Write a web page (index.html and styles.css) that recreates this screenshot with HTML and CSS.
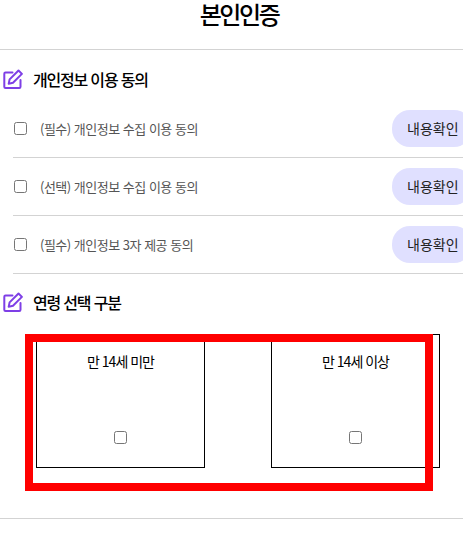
FILE: index.html
```html
<!DOCTYPE html>
<html lang="ko">
<head>
<meta charset="utf-8">
<title>본인인증</title>
<link rel="stylesheet" href="styles.css">
</head>
<body>
<main class="page">
  <header class="top"><h1 class="title">본인인증</h1></header>
  <section class="terms">
    <h2 class="heading">
      <svg class="icon" viewBox="0 0 20 20" aria-hidden="true"><path d="M9.500 3.500H2.500a1.200 1.200 0 0 0-1.200 1.200V17.800a1.200 1.200 0 0 0 1.200 1.200H16.300a1.200 1.200 0 0 0 1.200-1.200V11"/><path d="M15.500 1.500l3.400 3.400-8.900 8.900-4.300.9.900-4.300z"/></svg>
      개인정보 이용 동의
    </h2>
    <ul class="list">
      <li class="row"><input class="check" type="checkbox"><span class="label">(필수) 개인정보 수집 이용 동의</span><button class="pill">내용확인</button></li>
      <li class="row"><input class="check" type="checkbox"><span class="label">(선택) 개인정보 수집 이용 동의</span><button class="pill">내용확인</button></li>
      <li class="row"><input class="check" type="checkbox"><span class="label">(필수) 개인정보 3자 제공 동의</span><button class="pill">내용확인</button></li>
    </ul>
  </section>
  <section class="age">
    <h2 class="heading">
      <svg class="icon" viewBox="0 0 20 20" aria-hidden="true"><path d="M9.500 3.500H2.500a1.200 1.200 0 0 0-1.200 1.200V17.800a1.200 1.200 0 0 0 1.200 1.200H16.300a1.200 1.200 0 0 0 1.200-1.200V11"/><path d="M15.500 1.500l3.400 3.400-8.900 8.900-4.300.9.900-4.300z"/></svg>
      연령 선택 구분
    </h2>
    <div class="choices">
      <label class="choice"><span>만 14세 미만</span><input class="check" type="checkbox"></label>
      <label class="choice"><span>만 14세 이상</span><input class="check" type="checkbox"></label>
      <div class="mark"></div>
    </div>
  </section>
</main>
</body>
</html>
```

FILE: styles.css
```css
* { box-sizing: border-box; }
html, body { margin: 0; background: #fff; }
body { font-family: "Noto Sans CJK KR", "Noto Sans", sans-serif; color: #000; }
.page { width: 463px; height: 536px; overflow: hidden; }
.top { height: 50px; border-bottom: 1px solid #d3d3d3; }
.title { margin: 0; padding-left: 15px; height: 28px; font-size: 24px; line-height: 28px; font-weight: 500; text-align: center; letter-spacing: -2.4px; }
.terms { padding-top: 17px; }
.heading { display: flex; align-items: center; gap: 10px; height: 24px; margin: 0 0 0 3px; font-size: 16px; font-weight: 500; letter-spacing: -1.2px; }
.icon { width: 20px; height: 20px; fill: none; stroke: #7e3fe6; stroke-width: 2; stroke-linejoin: round; stroke-linecap: round; flex: none; }
.list { list-style: none; margin: 9px 0 0 13px; padding: 0; }
.row { display: flex; align-items: center; height: 58px; padding-bottom: 1px; border-bottom: 1px solid #d3d3d3; }
.check { width: 13px; height: 13px; margin: 0; flex: none; }
.row .check { margin: 0 0 0 1px; }
.label { margin-left: 13px; font-size: 13px; letter-spacing: -.5px; color: #555; flex: 1; }
.pill { flex: none; width: 80px; height: 37px; margin-right: -9px; padding: 0 0 0 15px; border: 0; border-radius: 18px; background: #e0e0ff; font: inherit; font-size: 14px; color: #222; text-align: left; letter-spacing: 0; }
.age { padding-top: 16px; }
.choices { position: relative; display: flex; justify-content: space-between; width: 404px; height: 184px; margin: 20px 0 0 36px; }
.choices::after { content: ""; position: absolute; left: -36px; top: 184px; width: 463px; height: 1px; background: #d3d3d3; }
.choice { display: flex; flex-direction: column; align-items: center; justify-content: space-between; width: 169px; height: 134px; padding: 16px 0 23px; border: 1px solid #000; font-size: 14px; letter-spacing: -1px; }
.choice span { line-height: 20px; }
.mark { position: absolute; left: -11px; top: 0; width: 408px; height: 157px; border: 8px solid #f00; pointer-events: none; }
```
